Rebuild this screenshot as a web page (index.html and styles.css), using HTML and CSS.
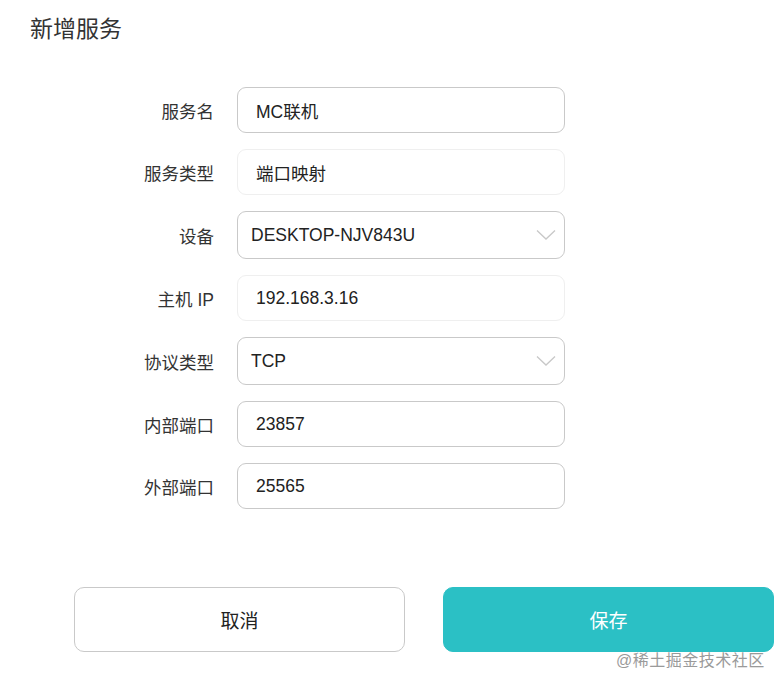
FILE: index.html
```html
<!DOCTYPE html>
<html lang="zh-CN">
<head>
<meta charset="utf-8">
<title>新增服务</title>
<link rel="stylesheet" href="styles.css">
</head>
<body>
<div class="page">
  <h1 class="title">新增服务</h1>
  <form class="form">
    <div class="row">
      <label class="label">服务名</label>
      <div class="field">MC联机</div>
    </div>
    <div class="row">
      <label class="label">服务类型</label>
      <div class="field field-disabled">端口映射</div>
    </div>
    <div class="row">
      <label class="label">设备</label>
      <div class="field field-select">
        <span>DESKTOP-NJV843U</span>
        <svg class="chevron" width="20" height="12" viewBox="0 0 20 12"><path d="M1 1.5 L10 10 L19 1.5" fill="none" stroke="#c8c8c8" stroke-width="1.3"/></svg>
      </div>
    </div>
    <div class="row">
      <label class="label">主机 IP</label>
      <div class="field field-disabled">192.168.3.16</div>
    </div>
    <div class="row">
      <label class="label">协议类型</label>
      <div class="field field-select">
        <span>TCP</span>
        <svg class="chevron" width="20" height="12" viewBox="0 0 20 12"><path d="M1 1.5 L10 10 L19 1.5" fill="none" stroke="#c8c8c8" stroke-width="1.3"/></svg>
      </div>
    </div>
    <div class="row">
      <label class="label">内部端口</label>
      <div class="field">23857</div>
    </div>
    <div class="row">
      <label class="label">外部端口</label>
      <div class="field">25565</div>
    </div>
  </form>
  <div class="actions">
    <button class="btn btn-cancel" type="button">取消</button>
    <button class="btn btn-save" type="button">保存</button>
  </div>
  <div class="watermark">@稀土掘金技术社区</div>
</div>
</body>
</html>
```

FILE: styles.css
```css
* { box-sizing: border-box; }
html, body {
  margin: 0;
  padding: 0;
  background: #fff;
}
body {
  font-family: "Liberation Sans", "Noto Sans CJK SC", sans-serif;
  color: #222;
}
.page {
  position: relative;
  width: 784px;
  height: 690px;
}
.title {
  margin: 0;
  padding: 14px 0 0 30px;
  font-size: 23px;
  line-height: 30px;
  font-weight: 400;
  color: #333;
}
.form {
  display: flex;
  flex-direction: column;
  gap: 16px;
  margin-top: 43px;
  padding-left: 94px;
}
.row {
  display: flex;
  align-items: center;
  gap: 23px;
}
.label {
  width: 120px;
  text-align: right;
  font-size: 17.5px;
  color: #333;
}
.field {
  width: 328px;
  height: 46px;
  display: flex;
  align-items: center;
  padding: 0 18px;
  border: 1px solid #c9c9c9;
  border-radius: 9px;
  font-size: 17.5px;
  color: #222;
  background: #fff;
}
.field-disabled {
  border-color: #efefef;
}
.field-select {
  height: 48px;
  padding: 0 8px 0 13px;
  justify-content: space-between;
}
.chevron {
  display: block;
}
.actions {
  display: flex;
  gap: 38px;
  margin-top: 78px;
  padding-left: 74px;
}
.btn {
  width: 331px;
  height: 65px;
  border-radius: 10px;
  font-family: "Liberation Sans", "Noto Sans CJK SC", sans-serif;
  font-size: 19px;
  cursor: pointer;
}
.btn-cancel {
  background: #fff;
  border: 1px solid #c9c9c9;
  color: #222;
}
.btn-save {
  background: #2bc0c5;
  border: 1px solid #2bc0c5;
  color: #fff;
}
.watermark {
  position: absolute;
  left: 616px;
  top: 650px;
  font-size: 16px;
  line-height: 22px;
  color: #9a9a9a;
  letter-spacing: 0.5px;
}
```
